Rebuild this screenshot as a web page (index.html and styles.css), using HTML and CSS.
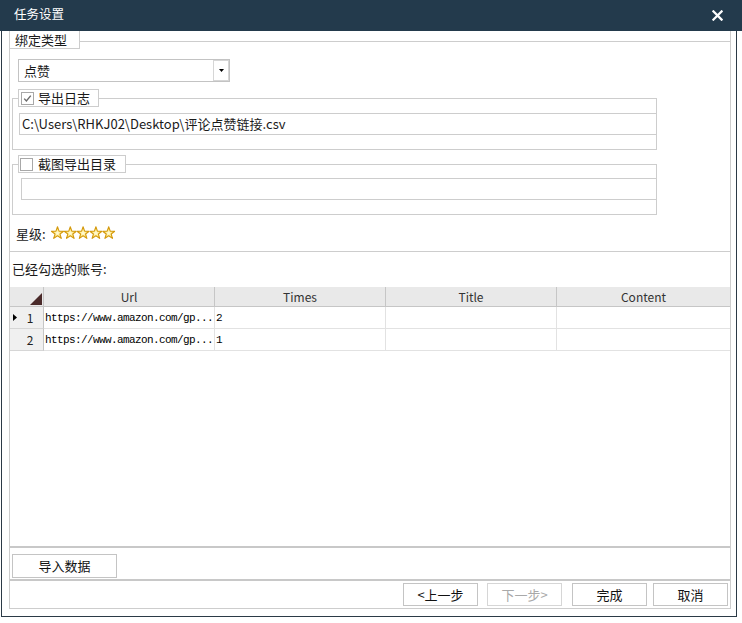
FILE: index.html
```html
<!DOCTYPE html>
<html lang="zh">
<head>
<meta charset="utf-8">
<title>任务设置</title>
<link rel="stylesheet" href="styles.css">
</head>
<body>
<div class="titlebar">
  <span class="title">任务设置</span>
  <svg class="close" viewBox="0 0 12 12"><path d="M1.5 1.5 L10.5 10.5 M10.5 1.5 L1.5 10.5" stroke="#fff" stroke-width="2.4" stroke-linecap="square"/></svg>
</div>
<div class="frame">
  <div class="panel">
    <div class="bind">
      <div class="bind-head">
        <div class="bind-legend">绑定类型</div>
        <div class="head-line"></div>
      </div>
      <div class="combo">
        <span class="combo-text">点赞</span>
        <span class="combo-btn"><svg width="5" height="3" viewBox="0 0 5 3"><polygon points="0,0 5,0 2.5,3" fill="#000"/></svg></span>
      </div>
      <div class="grp">
        <div class="grp-head">
          <div class="grp-corner"></div>
          <div class="chk-legend log-legend">
            <span class="checkbox"><svg width="11" height="11" viewBox="0 0 11 11"><path d="M2.2 5.6 L4.4 8 L8.8 2.6" fill="none" stroke="#6a6a6a" stroke-width="1.4"/></svg></span>
            <span class="chk-text">导出日志</span>
          </div>
          <div class="grp-tail"></div>
        </div>
        <div class="grp-body">
          <div class="textbox">C:\Users\RHKJ02\Desktop\评论点赞链接.csv</div>
        </div>
      </div>
      <div class="grp grp-shot">
        <div class="grp-head">
          <div class="grp-corner"></div>
          <div class="chk-legend shot-legend">
            <span class="checkbox"></span>
            <span class="chk-text">截图导出目录</span>
          </div>
          <div class="grp-tail"></div>
        </div>
        <div class="grp-body shot-body">
          <div class="textbox"></div>
        </div>
      </div>
      <div class="stars-row">
        <span>星级:</span>
        <svg class="stars" width="66" height="15" viewBox="0 0 66 15">
          <defs>
            <radialGradient id="sg" cx="50%" cy="55%" r="60%">
              <stop offset="0%" stop-color="#fffbe0"/>
              <stop offset="45%" stop-color="#ffec8a"/>
              <stop offset="100%" stop-color="#f0b818"/>
            </radialGradient>
            <symbol id="star" viewBox="0 0 13 14">
              <polygon points="6.5,0.8 8.03,5.1 12.59,5.22 8.97,8 10.26,12.38 6.5,9.8 2.74,12.38 4.03,8 0.41,5.22 4.97,5.1" fill="url(#sg)" stroke="#d49a10" stroke-width="1.1" stroke-linejoin="round"/>
            </symbol>
          </defs>
          <use href="#star" x="0" y="0" width="13" height="14"/>
          <use href="#star" x="12.8" y="0" width="13" height="14"/>
          <use href="#star" x="25.6" y="0" width="13" height="14"/>
          <use href="#star" x="38.4" y="0" width="13" height="14"/>
          <use href="#star" x="51.2" y="0" width="13" height="14"/>
        </svg>
      </div>
    </div>
    <div class="sel-label">已经勾选的账号:</div>
    <div class="grid">
      <div class="hcell corner"><svg width="12" height="12" viewBox="0 0 12 12"><polygon points="12,0 12,12 0,12" fill="#4a2a2a"/></svg></div>
      <div class="hcell">Url</div>
      <div class="hcell">Times</div>
      <div class="hcell">Title</div>
      <div class="hcell last">Content</div>

      <div class="rhead"><span class="rarrow"><svg width="4" height="7" viewBox="0 0 4 7"><polygon points="0,0 4,3.5 0,7" fill="#000"/></svg></span><span class="rnum">1</span></div>
      <div class="cell mono">https://www.amazon.com/gp...</div>
      <div class="cell mono">2</div>
      <div class="cell"></div>
      <div class="cell last"></div>

      <div class="rhead"><span class="rarrow"></span><span class="rnum">2</span></div>
      <div class="cell mono">https://www.amazon.com/gp...</div>
      <div class="cell mono">1</div>
      <div class="cell"></div>
      <div class="cell last"></div>
    </div>
    <div class="import-bar">
      <button class="btn import-btn">导入数据</button>
    </div>
    <div class="footer">
      <button class="btn fbtn">&lt;上一步</button>
      <button class="btn fbtn disabled btn-next">下一步&gt;</button>
      <button class="btn fbtn btn-done">完成</button>
      <button class="btn fbtn btn-cancel">取消</button>
    </div>
  </div>
</div>
</body>
</html>
```
FILE: styles.css
```css
* { box-sizing: border-box; }
html, body { margin: 0; padding: 0; }
body {
  width: 742px;
  height: 623px;
  overflow: hidden;
  background: #ffffff;
  font-family: "Noto Sans CJK SC", "Microsoft YaHei", sans-serif;
  font-size: 13px;
  color: #1a1a1a;
}
.titlebar {
  height: 31px;
  background: #233a4c;
  display: flex;
  align-items: center;
  justify-content: space-between;
  padding: 0 19px 0 14px;
  color: #ffffff;
}
.title { font-size: 12.5px; line-height: 16px; margin-top: -3px; }
.close { width: 11px; height: 11px; display: block; }

.frame {
  margin-left: 1px;
  width: 736px;
  height: 586px;
  border: 1px solid #2b3a46;
  border-top: 0;
  padding: 0 5px 7px 7px;
  background: #ffffff;
}
.panel {
  width: 722px;
  height: 578px;
  border: 1px solid #cdcdcd;
  border-top: 0;
  display: flex;
  flex-direction: column;
}

.bind { height: 221px; border-bottom: 1px solid #cdcdcd; flex: none; }
.bind-head { display: flex; height: 18px; }
.bind-legend {
  width: 70px;
  height: 18px;
  border-right: 1px solid #cdcdcd;
  border-bottom: 1px solid #cdcdcd;
  padding-left: 5px;
  line-height: 17px;
}
.head-line { flex: 1; height: 11px; border-bottom: 1px solid #cdcdcd; }

.combo {
  margin: 10px 0 0 8px;
  width: 212px;
  height: 23px;
  border: 1px solid #c3c3c3;
  display: flex;
  align-items: center;
  padding: 0 0 0 5px;
}
.combo-text { flex: 1; line-height: 20px; }
.combo-btn {
  width: 16px;
  height: 21px;
  border: 1px solid #d6d6d6;
  display: flex;
  align-items: center;
  justify-content: center;
}
.combo-btn svg { display: block; }

.grp { margin: 7px 0 0 2px; width: 645px; }
.grp-shot { margin-top: 5px; }
.grp-head { display: flex; height: 18px; }
.grp-corner {
  width: 6px;
  margin-top: 9px;
  border-top: 1px solid #cdcdcd;
  border-left: 1px solid #cdcdcd;
}
.chk-legend {
  height: 18px;
  border: 1px solid #cdcdcd;
  display: flex;
  align-items: center;
  padding-left: 2px;
}
.log-legend { width: 81px; }
.shot-legend { width: 108px; padding-left: 1px; }
.checkbox {
  width: 13px;
  height: 13px;
  border: 1px solid #a8a8a8;
  background: #ffffff;
  display: flex;
  align-items: center;
  justify-content: center;
  flex: none;
}
.checkbox svg { display: block; }
.chk-text { margin-left: 4px; line-height: 16px; }
.shot-legend .chk-text { margin-left: 5px; }
.grp-tail {
  flex: 1;
  margin-top: 9px;
  border-top: 1px solid #cdcdcd;
  border-right: 1px solid #cdcdcd;
}
.grp-body {
  border: 1px solid #cdcdcd;
  border-top: 0;
  padding: 6px 0 14px 6px;
}
.shot-body { padding: 5px 0 14px 8px; }
.textbox {
  height: 22px;
  border: 1px solid #cdcdcd;
  border-right: 0;
  padding-left: 2px;
  line-height: 20px;
  white-space: nowrap;
}

.stars-row {
  height: 36px;
  display: flex;
  align-items: center;
  padding-left: 6px;
}
.stars { margin-left: 5px; display: block; }

.sel-label {
  height: 35px;
  flex: none;
  padding-left: 2px;
  line-height: 34px;
}

.grid {
  flex: none;
  height: 260px;
  border-bottom: 1px solid #c8c8c8;
  display: grid;
  grid-template-columns: 34px 171px 171px 171px 173px;
  grid-template-rows: 20px 22px 22px;
  align-content: start;
}
.hcell {
  background: #e9e9e9;
  border-right: 1px solid #c6c6c6;
  border-bottom: 1px solid #c6c6c6;
  text-align: center;
  font-size: 12px;
  line-height: 19px;
  color: #333333;
}
.hcell.last { border-right: 0; }
.corner {
  display: flex;
  justify-content: flex-end;
  align-items: flex-end;
  padding: 0 1px 1px 0;
}
.corner svg { display: block; }
.rhead {
  background: #f0f0f0;
  border-right: 1px solid #c6c6c6;
  border-bottom: 1px solid #d6d6d6;
  display: flex;
  align-items: center;
  font-size: 12px;
  color: #222222;
}
.rarrow { width: 4px; margin-left: 3px; display: flex; }
.rarrow svg { display: block; }
.rnum { flex: 1; text-align: center; padding-left: 0; line-height: 20px; }
.cell {
  border-right: 1px solid #e2e2e2;
  border-bottom: 1px solid #e2e2e2;
  background: #ffffff;
}
.cell.last { border-right: 0; }
.mono {
  font-family: "Liberation Mono", "Courier New", monospace;
  font-size: 11px;
  letter-spacing: -0.6px;
  line-height: 22px;
  padding-left: 1px;
  color: #000000;
  white-space: nowrap;
  overflow: hidden;
}

.btn {
  font-family: "Noto Sans CJK SC", "Microsoft YaHei", sans-serif;
  font-size: 13px;
  color: #111111;
  background: #ffffff;
  border: 1px solid #c4c4c4;
  padding: 0;
  margin: 0;
  line-height: 20px;
}
.import-bar {
  flex: none;
  height: 33px;
  border-top: 1px solid #c8c8c8;
  border-bottom: 1px solid #c8c8c8;
  padding: 6px 0 0 2px;
}
.import-btn { width: 105px; height: 24px; display: block; }

.footer {
  flex: 1;
  border-top: 1px solid #c8c8c8;
  display: flex;
  justify-content: flex-end;
  align-items: flex-start;
  padding: 2px 2px 0 0;
}
.fbtn { width: 75px; height: 23px; }
.btn-next { margin-left: 9px; }
.btn-done { margin-left: 10px; }
.btn-cancel { margin-left: 6px; }
.disabled { color: #a9a9a9; border-color: #d6d6d6; }
```
